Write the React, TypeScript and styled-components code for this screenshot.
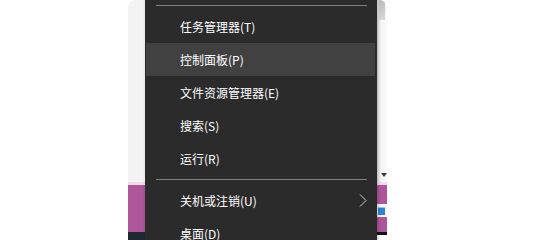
import React from "react";
import styled, { createGlobalStyle } from "styled-components";

const GlobalStyle = createGlobalStyle`
  html, body { margin: 0; padding: 0; background: #ffffff; }
  body { overflow: hidden; }
`;

const Stage = styled.div`
  width: 543px;
  height: 240px;
  overflow: hidden;
  display: flex;
  padding-left: 128px;
  box-sizing: border-box;
  background: #ffffff;
`;

const Window = styled.div`
  position: relative;
  width: 259px;
  height: 240px;
  display: flex;
  flex-direction: column;
  border-top-left-radius: 8px;
  border-top-right-radius: 8px;
  overflow: hidden;
`;

const Pane = styled.div`
  height: 182px;
  background: #f3f3f3;
  display: flex;
  justify-content: flex-end;
`;

const ScrollRail = styled.div`
  width: 10px;
  display: flex;
  flex-direction: column;
  align-items: center;
  background: linear-gradient(90deg, #e2e2e2 0%, #f4f4f4 40%, #fafafa 100%);
`;

const Thumb = styled.div`
  width: 6px;
  height: 20px;
  background: linear-gradient(180deg, #bcbcbc 0%, #d8d8d8 100%);
`;

const RailSpacer = styled.div`
  flex: 1;
`;

const ArrowDown = styled.div`
  width: 0;
  height: 0;
  margin: 0 0 5px 4px;
  border-left: 3px solid transparent;
  border-right: 3px solid transparent;
  border-top: 4px solid #3a3a3a;
`;

const Stripe = styled.div`
  height: 3px;
  background: #f1dcec;
`;

const Band = styled.div`
  height: 47px;
  background: #ad5699;
  display: flex;
  justify-content: flex-end;
  align-items: center;
`;

const IconSlot = styled.div`
  width: 10px;
  height: 13px;
  background: #f7f7f7;
  display: flex;
  align-items: center;
  padding-left: 1px;
  box-sizing: border-box;
  margin-top: 4px;
`;

const BlueIcon = styled.div`
  width: 7px;
  height: 7px;
  background: #2f82d6;
  border-top: 1px solid #8cc4f0;
`;

const Footer = styled.div`
  flex: 1;
  background: #1d2a32;
  display: flex;
  justify-content: flex-end;
`;

const FooterCap = styled.div`
  width: 10px;
  border-top: 3px solid #111;
  background: #ffffff;
`;

const Menu = styled.div`
  position: absolute;
  left: 17px;
  top: -8px;
  width: 232px;
  height: 270px;
  padding-top: 9px;
  box-sizing: border-box;
  background: #2b2b2b;
  box-shadow: 1px 0 3px rgba(0, 0, 0, 0.25);
  display: flex;
  flex-direction: column;
  font-family: "Noto Sans CJK SC", "Noto Sans", sans-serif;
`;

const Separator = styled.div`
  padding: 4px 10px 4px 11px;
  &::after {
    content: "";
    display: block;
    height: 1px;
    background: #7f7f7f;
  }
`;

const Item = styled.div<{ $active?: boolean }>`
  height: 33px;
  flex: 0 0 33px;
  margin: 0 2px 0 1px;
  padding: 0 8px 0 34px;
  display: flex;
  align-items: center;
  justify-content: space-between;
  background: ${(p) => (p.$active ? "#414141" : "transparent")};
  color: #ffffff;
  font-size: 12px;
  line-height: 1;
  white-space: nowrap;
`;

const Label = styled.span`
  display: block;
  margin-top: 1px;
`;

const Chevron = () => (
  <svg width="8" height="13" viewBox="0 0 8 13" fill="none">
    <polyline points="1,0.5 7,6.5 1,12.5" stroke="#cfcfcf" strokeWidth="1" />
  </svg>
);

type Entry = { kind: "sep" } | { kind: "item"; label: string; active?: boolean; sub?: boolean };

const entries: Entry[] = [
  { kind: "sep" },
  { kind: "item", label: "任务管理器(T)" },
  { kind: "item", label: "控制面板(P)", active: true },
  { kind: "item", label: "文件资源管理器(E)" },
  { kind: "item", label: "搜索(S)" },
  { kind: "item", label: "运行(R)" },
  { kind: "sep" },
  { kind: "item", label: "关机或注销(U)", sub: true },
  { kind: "item", label: "桌面(D)" },
];

export default function App() {
  return (
    <>
      <GlobalStyle />
      <Stage>
        <Window>
          <Pane>
            <ScrollRail>
              <Thumb />
              <RailSpacer />
              <ArrowDown />
            </ScrollRail>
          </Pane>
          <Stripe />
          <Band>
            <IconSlot>
              <BlueIcon />
            </IconSlot>
          </Band>
          <Footer>
            <FooterCap />
          </Footer>
          <Menu>
            {entries.map((e, i) =>
              e.kind === "sep" ? (
                <Separator key={i} />
              ) : (
                <Item key={i} $active={e.active}>
                  <Label>{e.label}</Label>
                  {e.sub && <Chevron />}
                </Item>
              )
            )}
          </Menu>
        </Window>
      </Stage>
    </>
  );
}
